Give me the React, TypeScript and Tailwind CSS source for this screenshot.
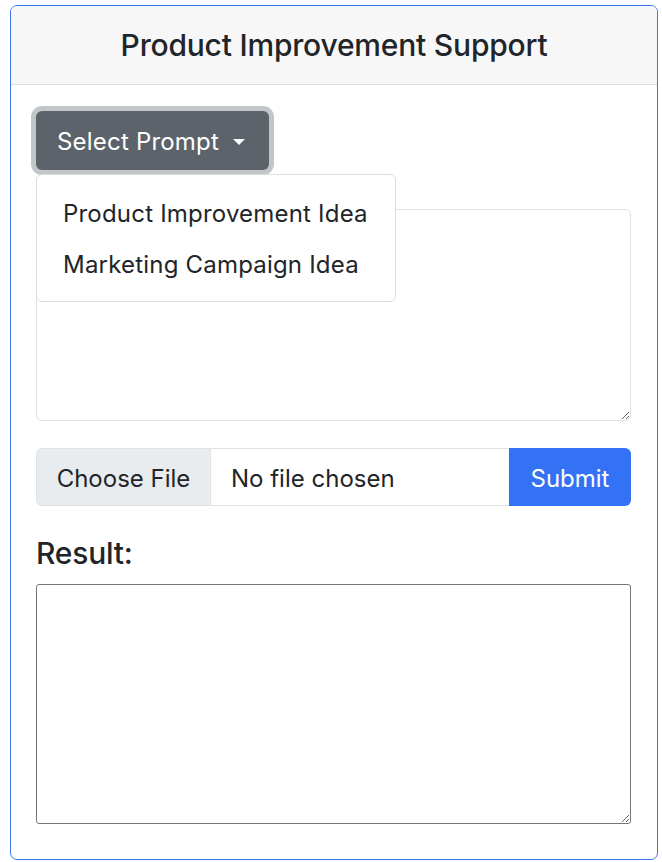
import { useState } from "react";

const prompts = ["Product Improvement Idea", "Marketing Campaign Idea"];

export default function App() {
  const [open, setOpen] = useState(true);
  const [prompt, setPrompt] = useState("");
  const [result] = useState("");

  return (
    <div className="min-h-[862px] bg-white pt-[5px] pl-[10px] font-['Inter','Liberation_Sans',Arial,sans-serif] text-[#212529]">
      <div className="w-[648px] h-[855px] rounded-[7px] border border-[#3b76f0] overflow-hidden flex flex-col">
        <div className="h-[79px] shrink-0 bg-[#f7f7f7] border-b border-[#dcdcdc] flex items-center justify-center">
          <h5 className="text-[30px] font-medium tracking-[-0.2px]">Product Improvement Support</h5>
        </div>

        <div className="relative flex-1 px-[25px] pt-[26px]">
          {/* dropdown */}
          <button
            onClick={() => setOpen(!open)}
            className="h-[59px] w-[233px] rounded-[6px] bg-[#5c636a] text-white text-[24px] flex items-center pt-[2px] pl-[21px] gap-[14px] ring-[5px] ring-[#c3c6c9]"
          >
            <span className="tracking-[0.2px]">Select Prompt</span>
            <span className="inline-block w-0 h-0 border-x-[6px] border-x-transparent border-t-[6px] border-t-white" />
          </button>

          {open && (
            <ul className="absolute top-[89px] left-[25px] w-[360px] h-[128px] bg-white border border-[#dcdfe2] rounded-[6px] py-[13px] z-10">
              {prompts.map(p => (
                <li
                  key={p}
                  onClick={() => { setPrompt(p); setOpen(false); }}
                  className="h-[51px] px-[26px] flex items-center text-[24px] tracking-[0.2px] cursor-pointer hover:bg-[#e9ecef]"
                >
                  {p}
                </li>
              ))}
            </ul>
          )}

          <textarea
            value={prompt}
            onChange={e => setPrompt(e.target.value)}
            className="mt-[39px] block w-[595px] h-[212px] rounded-[6px] border border-[#dee2e6] p-3 text-[24px] outline-none"
          />

          {/* file + submit */}
          <div className="mt-[27px] w-[595px] h-[58px] flex text-[24px]">
            <label className="w-[175px] shrink-0 flex items-center justify-center pt-[3px] bg-[#e9ecef] border border-[#dee2e6] rounded-l-[6px] cursor-pointer">
              Choose File
            </label>
            <div className="flex-1 flex items-center pt-[3px] pl-[20px] border-y border-[#dee2e6]">
              No file chosen
            </div>
            <button className="w-[122px] shrink-0 pt-[3px] bg-[#3371f5] text-white rounded-r-[6px]">Submit</button>
          </div>

          <h4 className="mt-[29px] text-[30px] font-medium leading-[36px] tracking-[-0.2px]">Result:</h4>

          <textarea
            value={result}
            readOnly
            className="mt-[13px] block w-[595px] h-[240px] rounded-[3px] border border-[#767676] outline-none"
          />
        </div>
      </div>
    </div>
  );
}
